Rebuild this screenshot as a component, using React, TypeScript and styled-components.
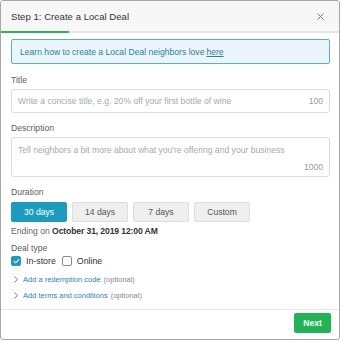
import styled, { createGlobalStyle } from "styled-components";

const GlobalStyle = createGlobalStyle`
  body {
    margin: 0;
    background: #ffffff;
    font-family: "Liberation Sans", Arial, sans-serif;
  }
`;

const Modal = styled.div`
  box-sizing: border-box;
  width: 340px;
  height: 340px;
  border: 1px solid #a7a7a7;
  border-radius: 3px;
  background: #fff;
  display: flex;
  flex-direction: column;
  overflow: hidden;
`;

const Header = styled.div`
  height: 30px;
  display: flex;
  align-items: center;
  justify-content: space-between;
  padding: 0 10px;
  background: #f7f7f7;
`;

const HeaderTitle = styled.div`
  font-size: 9.5px;
  color: #333;
  letter-spacing: 0.05px;
`;

const CloseButton = styled.div`
  width: 10px;
  height: 10px;
  margin-right: 4px;
  display: flex;
  align-items: center;
  justify-content: center;
`;

const Progress = styled.div`
  height: 2px;
  background: #e4e4e4;
`;

const ProgressFill = styled.div`
  height: 100%;
  background: #2cb552;
`;

const Body = styled.div`
  padding: 6px 9px 0 10px;
  display: flex;
  flex-direction: column;
`;

const InfoBox = styled.div`
  box-sizing: border-box;
  height: 25px;
  display: flex;
  align-items: center;
  padding: 0 8px;
  background: #eaf6fa;
  border: 1px solid #5aadcb;
  border-radius: 2px;
  font-size: 8.6px;
  color: #2a7fa3;
`;

const InfoLink = styled.span`
  margin-left: 2px;
  text-decoration: underline;
`;

const Label = styled.div<{ $top: number }>`
  margin-top: ${({ $top }) => $top}px;
  line-height: 12px;
  font-size: 8.6px;
  color: #5c5c5c;
`;

const Field = styled.div<{ $tall?: boolean }>`
  box-sizing: border-box;
  margin-top: 3px;
  height: ${({ $tall }) => ($tall ? 40 : 24)}px;
  border: 1px solid #dcdcdc;
  border-radius: 3px;
  display: flex;
  flex-direction: ${({ $tall }) => ($tall ? "column" : "row")};
  justify-content: space-between;
  align-items: ${({ $tall }) => ($tall ? "stretch" : "center")};
  padding: ${({ $tall }) => ($tall ? "6px 6px 3px 6px" : "0 6px")};
  font-size: 8.6px;
  line-height: 12px;
  color: #a9a9a9;
`;

const Counter = styled.span`
  text-align: right;
  color: #999;
`;

const DurationRow = styled.div`
  margin-top: 4px;
  display: flex;
  gap: 5px;
`;

const DurationButton = styled.div<{ $active?: boolean }>`
  box-sizing: border-box;
  width: 56px;
  height: 20px;
  display: flex;
  align-items: center;
  justify-content: center;
  border-radius: 2px;
  font-size: 8.6px;
  background: ${({ $active }) => ($active ? "#1b9bc0" : "#efefef")};
  border: 1px solid ${({ $active }) => ($active ? "#1b9bc0" : "#dedede")};
  color: ${({ $active }) => ($active ? "#fff" : "#555")};
`;

const Ending = styled.div`
  margin-top: 3px;
  line-height: 12px;
  font-size: 8.6px;
  color: #666;

  b {
    color: #333;
    letter-spacing: -0.12px;
  }
`;

const CheckRow = styled.div`
  margin-top: 1px;
  height: 12px;
  display: flex;
  align-items: center;
`;

const CheckBox = styled.div<{ $checked?: boolean }>`
  box-sizing: border-box;
  width: 10px;
  height: 10px;
  border-radius: 2px;
  border: 1px solid ${({ $checked }) => ($checked ? "#1b9bc0" : "#8a8a8a")};
  background: ${({ $checked }) => ($checked ? "#1b9bc0" : "#fff")};
  display: flex;
  align-items: center;
  justify-content: center;
`;

const CheckLabel = styled.span`
  margin: 0 6px 0 5px;
  font-size: 8.8px;
  color: #333;
`;

const ExpandRow = styled.div<{ $top: number }>`
  margin-top: ${({ $top }) => $top}px;
  height: 12px;
  display: flex;
  align-items: center;
  padding-left: 3px;
  font-size: 7.5px;
`;

const ExpandLink = styled.span`
  margin-left: 5px;
  color: #2a86ad;
`;

const Optional = styled.span`
  margin-left: 3px;
  color: #888;
`;

const Divider = styled.div`
  margin-top: 8px;
  height: 1px;
  background: #e6e6e6;
`;

const Footer = styled.div`
  display: flex;
  justify-content: flex-end;
  padding: 3px 8px 0 0;
`;

const NextButton = styled.div`
  width: 37px;
  height: 20px;
  border-radius: 2px;
  background: #20b456;
  color: #fff;
  font-size: 8.6px;
  font-weight: bold;
  display: flex;
  align-items: center;
  justify-content: center;
`;

const Chevron = () => (
  <svg width="4" height="7" viewBox="0 0 4 7">
    <path d="M0.5 0.5 L3.3 3.5 L0.5 6.5" fill="none" stroke="#666" strokeWidth="0.9" />
  </svg>
);

const durations = ["30 days", "14 days", "7 days", "Custom"];

export default function App() {
  return (
    <>
      <GlobalStyle />
      <Modal>
        <Header>
          <HeaderTitle>Step 1: Create a Local Deal</HeaderTitle>
          <CloseButton>
            <svg width="7" height="7" viewBox="0 0 7 7">
              <path d="M0.5 0.5 L6.5 6.5 M6.5 0.5 L0.5 6.5" stroke="#777" strokeWidth="1" />
            </svg>
          </CloseButton>
        </Header>
        <Progress>
          <ProgressFill style={{ width: "20%" }} />
        </Progress>
        <Body>
          <InfoBox>
            Learn how to create a Local Deal neighbors love
            <InfoLink>here</InfoLink>
          </InfoBox>
          <Label $top={10}>Title</Label>
          <Field>
            <span>Write a concise title, e.g. 20% off your first bottle of wine</span>
            <Counter>100</Counter>
          </Field>
          <Label $top={9}>Description</Label>
          <Field $tall>
            <span>Tell neighbors a bit more about what you're offering and your business</span>
            <Counter>1000</Counter>
          </Field>
          <Label $top={9}>Duration</Label>
          <DurationRow>
            {durations.map((d, i) => (
              <DurationButton key={d} $active={i === 0}>
                {d}
              </DurationButton>
            ))}
          </DurationRow>
          <Ending>
            Ending on <b>October 31, 2019 12:00 AM</b>
          </Ending>
          <Label $top={5}>Deal type</Label>
          <CheckRow>
            <CheckBox $checked>
              <svg width="7" height="6" viewBox="0 0 7 6">
                <path d="M0.8 3 L2.7 4.8 L6.2 1" fill="none" stroke="#fff" strokeWidth="1.1" />
              </svg>
            </CheckBox>
            <CheckLabel>In-store</CheckLabel>
            <CheckBox />
            <CheckLabel>Online</CheckLabel>
          </CheckRow>
          <ExpandRow $top={6}>
            <Chevron />
            <ExpandLink>Add a redemption code</ExpandLink>
            <Optional>(optional)</Optional>
          </ExpandRow>
          <ExpandRow $top={4}>
            <Chevron />
            <ExpandLink>Add terms and conditions</ExpandLink>
            <Optional>(optional)</Optional>
          </ExpandRow>
        </Body>
        <Divider />
        <Footer>
          <NextButton>Next</NextButton>
        </Footer>
      </Modal>
    </>
  );
}
